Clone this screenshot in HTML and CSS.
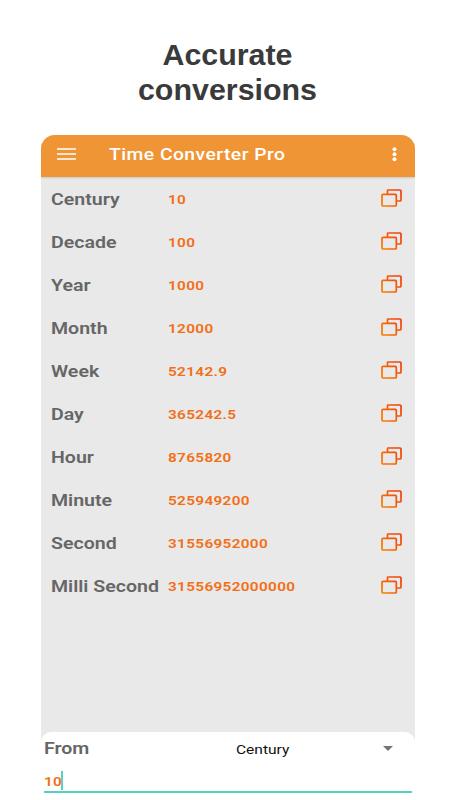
FILE: index.html
```
<!DOCTYPE html>
<html lang="en">
<head>
  <meta charset="UTF-8">
  <title>Time Converter Pro</title>
  <link rel="stylesheet" href="styles.css">
</head>
<body>
<h1 class="headline">Accurate<br>conversions</h1>

<svg width="0" height="0" class="defs">
  <defs>
    <linearGradient id="copy-color" gradientUnits="userSpaceOnUse" x1="0" y1="18" x2="21" y2="0">
      <stop offset="0" stop-color="#fb8200"/>
      <stop offset="1" stop-color="#ee3a0c"/>
    </linearGradient>
    <symbol id="copy" viewBox="0 0 21 18">
      <path d="M6.500 5V1.500q0-.500.500-.500H19q1 0 1 1V11q0 1-1 1H16" fill="none" stroke="url(#copy-color)" stroke-width="1.700"/>
      <rect x="1" y="5.300" width="14.300" height="11.700" rx="1" fill="none" stroke="url(#copy-color)" stroke-width="1.700"/>
    </symbol>
  </defs>
</svg>

<div class="phone">
  <header class="toolbar">
    <svg class="menu" width="20" height="12" viewBox="0 0 20 12"><path d="M0 1h19M0 6h19M0 11h19" stroke="#fff" stroke-width="1.700"/></svg>
    <span class="title">Time Converter Pro</span>
    <svg class="more" width="5" height="15" viewBox="0 0 5 15" fill="#fff"><circle cx="2.500" cy="2.200" r="2"/><circle cx="2.500" cy="7.200" r="2"/><circle cx="2.500" cy="12.300" r="2"/></svg>
  </header>

  <ul class="results">
    <li><span class="unit">Century</span><span class="value">10</span><svg class="copy"><use href="#copy"/></svg></li>
    <li><span class="unit">Decade</span><span class="value">100</span><svg class="copy"><use href="#copy"/></svg></li>
    <li><span class="unit">Year</span><span class="value">1000</span><svg class="copy"><use href="#copy"/></svg></li>
    <li><span class="unit">Month</span><span class="value">12000</span><svg class="copy"><use href="#copy"/></svg></li>
    <li><span class="unit">Week</span><span class="value">52142.9</span><svg class="copy"><use href="#copy"/></svg></li>
    <li><span class="unit">Day</span><span class="value">365242.5</span><svg class="copy"><use href="#copy"/></svg></li>
    <li><span class="unit">Hour</span><span class="value">8765820</span><svg class="copy"><use href="#copy"/></svg></li>
    <li><span class="unit">Minute</span><span class="value">525949200</span><svg class="copy"><use href="#copy"/></svg></li>
    <li><span class="unit">Second</span><span class="value">31556952000</span><svg class="copy"><use href="#copy"/></svg></li>
    <li><span class="unit">Milli Second</span><span class="value">31556952000000</span><svg class="copy"><use href="#copy"/></svg></li>
  </ul>

  <div class="input-panel">
    <div class="from-row">
      <span class="unit from">From</span>
      <span class="selected">Century</span>
      <svg class="arrow" width="10" height="5" viewBox="0 0 10 5"><path d="M0 0h10L5 5z" fill="#757575"/></svg>
    </div>
    <div class="field"><span class="value">10</span><span class="caret"></span></div>
  </div>
</div>
</body>
</html>
```
FILE: styles.css
```
html, body {
  margin: 0;
  padding: 0;
  background: #fff;
  overflow: hidden;
}
body {
  height: 800px;
  font-family: Roboto, sans-serif;
}
.defs {
  display: block;
}
.headline {
  margin: 0;
  padding: 37px 0 0 5px;
  height: 98px;
  text-align: center;
  font: bold 30.400px/35px "Liberation Sans", Arial, sans-serif;
  color: #3a3a3a;
}
.phone {
  width: 373.500px;
  height: 665px;
  margin-left: 41px;
  display: flex;
  flex-direction: column;
  background: #e9e9e9;
  border-radius: 14px 14px 0 0;
  overflow: hidden;
}
.toolbar {
  height: 42px;
  flex: none;
  box-sizing: border-box;
  display: flex;
  align-items: center;
  padding: 0 18px 4px 16px;
  background: #f09536;
  box-shadow: 0 1px 2px rgba(0,0,0,0.15);
}
.title {
  margin-left: 32px;
  flex: 1;
  font-size: 17px;
  font-weight: 500;
  color: #fff;
  letter-spacing: 0.4px;
  transform: scaleX(1.135);
  transform-origin: left;
}
.results {
  flex: 1;
  list-style: none;
  margin: 0;
  padding: 0 13px 0 10px;
}
.results li {
  height: 43px;
  display: flex;
  align-items: center;
}
.unit {
  width: 116.500px;
  flex: none;
  font-size: 17px;
  font-weight: 600;
  color: #666;
  white-space: nowrap;
  transform: scaleX(1.15);
  transform-origin: left;
}
.results .unit {
  padding-top: 1px;
}
.value {
  font-size: 13.500px;
  font-weight: 600;
  letter-spacing: 0.300px;
  color: #f26f16;
  transform: scaleX(1.135);
  transform-origin: left;
}
.copy {
  width: 21px;
  height: 18px;
  margin: 0 0 2px auto;
}
.input-panel {
  height: 68.500px;
  flex: none;
  box-sizing: border-box;
  padding: 0 2.500px;
  background: #fff;
  border-radius: 10px 10px 0 0;
}
.from-row {
  height: 33px;
  display: flex;
  align-items: center;
}
.from {
  width: 192px;
}
.selected {
  flex: 1;
  padding-top: 2px;
  font-size: 13.500px;
  color: #111;
  transform: scaleX(1.15);
  transform-origin: left;
}
.arrow {
  margin-right: 19px;
}
.field {
  height: 26px;
  display: flex;
  align-items: center;
  border-bottom: 2px solid #55d1bd;
}
.field .value {
  padding-top: 6px;
}
.caret {
  width: 2px;
  height: 19px;
  margin: 5px 0 0 1px;
  background: #55d1bd;
}
```
